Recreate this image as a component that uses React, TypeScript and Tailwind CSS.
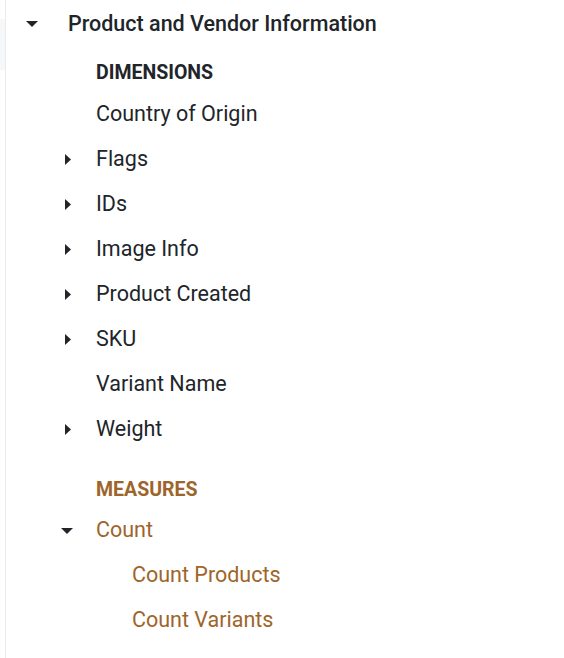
import React from "react";

const DARK = "text-[#212529]";
const BROWN = "text-[#9e652b]";

function CaretDown() {
  return (
    <svg width="12" height="6" viewBox="0 0 12 6" className="block">
      <polygon points="0,0 12,0 6,6" fill="#212529" />
    </svg>
  );
}

function CaretRight() {
  return (
    <svg width="6" height="11" viewBox="0 0 6 11" className="block">
      <polygon points="0,0 6,5.5 0,11" fill="#212529" />
    </svg>
  );
}

type Item = { label: string; expandable?: boolean };

const DIMENSIONS: Item[] = [
  { label: "Country of Origin" },
  { label: "Flags", expandable: true },
  { label: "IDs", expandable: true },
  { label: "Image Info", expandable: true },
  { label: "Product Created", expandable: true },
  { label: "SKU", expandable: true },
  { label: "Variant Name" },
  { label: "Weight", expandable: true },
];

function Row({ item }: { item: Item }) {
  return (
    <div className="flex h-[45px] items-center">
      <div className="flex w-[96px] justify-end pr-[25px]">
        {item.expandable ? <CaretRight /> : null}
      </div>
      <span className={`text-[21.5px] ${DARK}`}>{item.label}</span>
    </div>
  );
}

export default function App() {
  return (
    <div
      className="relative min-h-[658px] w-[564px] bg-white"
      style={{ fontFamily: "Roboto, 'Liberation Sans', sans-serif" }}
    >
      {/* faint sidebar edge */}
      <div className="absolute left-0 top-[19px] h-[51px] w-[5px] bg-[#f6f7f8]" />
      <div className="absolute bottom-0 left-[5px] top-0 w-px bg-[#e9eaec]" />

      <div className="flex h-[48px] items-center">
        <div className="flex w-[68px] pl-[26px]">
          <CaretDown />
        </div>
        <span className={`text-[21.5px] font-medium ${DARK}`}>
          Product and Vendor Information
        </span>
      </div>

      <div className="flex h-[44px] items-center pl-[96px] pt-[5px]">
        <span className={`text-[19.5px] font-bold ${DARK}`}>DIMENSIONS</span>
      </div>

      {DIMENSIONS.map((d) => (
        <Row key={d.label} item={d} />
      ))}

      <div className="mt-[18px] flex h-[38px] items-center pl-[96px] pt-[2px]">
        <span className={`text-[19.5px] font-bold ${BROWN}`}>MEASURES</span>
      </div>

      <div className="flex h-[45px] items-center">
        <div className="flex w-[96px] justify-end pr-[23px]">
          <CaretDown />
        </div>
        <span className={`text-[21.5px] ${BROWN}`}>Count</span>
      </div>
      <div className="flex h-[45px] items-center pl-[132px]">
        <span className={`text-[21.5px] ${BROWN}`}>Count Products</span>
      </div>
      <div className="flex h-[45px] items-center pl-[132px]">
        <span className={`text-[21.5px] ${BROWN}`}>Count Variants</span>
      </div>
    </div>
  );
}
